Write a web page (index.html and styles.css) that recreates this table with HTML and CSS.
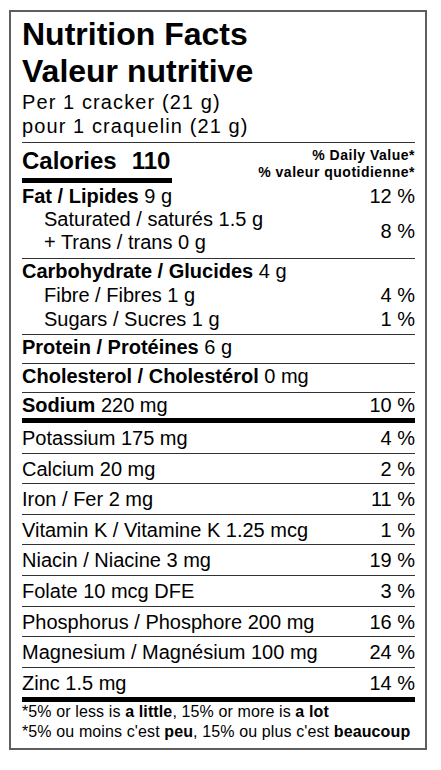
FILE: index.html
```html
<!DOCTYPE html>
<html lang="en">

<head>
    <meta charset="UTF-8">
    <meta name="viewport" content="width=device-width, initial-scale=1.0">
    <title>Nutrition Facts - Valeur nutritive</title>
    <link rel="stylesheet" href="styles.css">
</head>

<body>
    <div class="label">
        <div class="label-header">
            <h1 class="title">Nutrition Facts<br>Valeur nutritive</h1>
            <div class="serving">Per 1 cracker (21 g)<br>pour 1 craquelin (21 g)</div>
        </div>

        <div class="calories-row">
            <div class="calories"><span class="calories-label">Calories</span>110</div>
            <div class="dv-heading">% Daily Value*<br>% valeur quotidienne*</div>
        </div>

        <!-- Fat -->
        <div class="section section-fat">
            <div class="row"><span><b>Fat / Lipides</b> 9 g</span><span>12 %</span></div>
            <div class="row sub-group">
                <div class="sub-lines">
                    <div>Saturated / saturés 1.5 g</div>
                    <div>+ Trans / trans 0 g</div>
                </div>
                <span>8 %</span>
            </div>
        </div>

        <!-- Carbohydrate -->
        <div class="section section-carb">
            <div class="row"><span><b>Carbohydrate / Glucides</b> 4 g</span></div>
            <div class="row sub"><span>Fibre / Fibres 1 g</span><span>4 %</span></div>
            <div class="row sub"><span>Sugars / Sucres 1 g</span><span>1 %</span></div>
        </div>

        <div class="section section-single">
            <div class="row"><span><b>Protein / Protéines</b> 6 g</span></div>
        </div>

        <div class="section section-single">
            <div class="row"><span><b>Cholesterol / Cholestérol</b> 0 mg</span></div>
        </div>

        <div class="section section-sodium">
            <div class="row"><span><b>Sodium</b> 220 mg</span><span>10 %</span></div>
        </div>

        <!-- Minerals and vitamins -->
        <div class="row mineral"><span>Potassium 175 mg</span><span>4 %</span></div>
        <div class="row mineral"><span>Calcium 20 mg</span><span>2 %</span></div>
        <div class="row mineral"><span>Iron / Fer 2 mg</span><span>11 %</span></div>
        <div class="row mineral"><span>Vitamin K / Vitamine K 1.25 mcg</span><span>1 %</span></div>
        <div class="row mineral"><span>Niacin / Niacine 3 mg</span><span>19 %</span></div>
        <div class="row mineral"><span>Folate 10 mcg DFE</span><span>3 %</span></div>
        <div class="row mineral"><span>Phosphorus / Phosphore 200 mg</span><span>16 %</span></div>
        <div class="row mineral"><span>Magnesium / Magnésium 100 mg</span><span>24 %</span></div>
        <div class="row mineral mineral-last"><span>Zinc 1.5 mg</span><span>14 %</span></div>

        <div class="footnote">
            <div>*5% or less is <b>a little</b>, 15% or more is <b>a lot</b></div>
            <div>*5% ou moins c'est <b>peu</b>, 15% ou plus c'est <b>beaucoup</b></div>
        </div>
    </div>
</body>

</html>
```

FILE: styles.css
```css
* {
    margin: 0;
    padding: 0;
    box-sizing: border-box;
}

body {
    background: #fff;
    color: #000;
    font-family: "Liberation Sans", Arial, sans-serif;
}

.label {
    width: 418px;
    margin: 10px 0 0 9px;
    border: 2px solid #5e5e5e;
    padding: 4px 10px 7px 11px;
}

.title {
    font-size: 32px;
    font-weight: 700;
    line-height: 37px;
}

.serving {
    font-size: 20px;
    line-height: 24px;
    letter-spacing: 1.1px;
    padding-bottom: 4px;
    border-bottom: 1px solid #333;
}

.calories-row {
    display: flex;
    justify-content: space-between;
    align-items: flex-start;
    padding-top: 4px;
}

.calories {
    font-size: 24px;
    font-weight: 700;
    line-height: 28px;
    padding: 0 2px 3px 0;
    border-bottom: 5px solid #000;
}

.calories-label {
    margin-right: 15px;
}

.dv-heading {
    font-size: 14px;
    font-weight: 700;
    line-height: 17px;
    letter-spacing: 0.5px;
    text-align: right;
}

.row {
    display: flex;
    justify-content: space-between;
    font-size: 20px;
    line-height: 24px;
    white-space: nowrap;
}

.sub {
    padding-left: 22px;
}

.sub-group {
    align-items: center;
    line-height: 23px;
}

.sub-lines {
    padding-left: 22px;
}

.section {
    border-bottom: 1px solid #333;
}

.section-fat {
    padding: 1px 0 4px;
}

.section-carb {
    padding-bottom: 3px;
}

.section-single {
    padding-bottom: 4px;
}

.section-sodium {
    padding-bottom: 1px;
    border-bottom: 5px solid #000;
}

.mineral {
    padding: 3px 0 2.6px;
    border-bottom: 1px solid #333;
}

.mineral-last {
    border-bottom: 5px solid #000;
}

.footnote {
    font-size: 16px;
    line-height: 19.5px;
    letter-spacing: 0.12px;
    white-space: nowrap;
}
```
